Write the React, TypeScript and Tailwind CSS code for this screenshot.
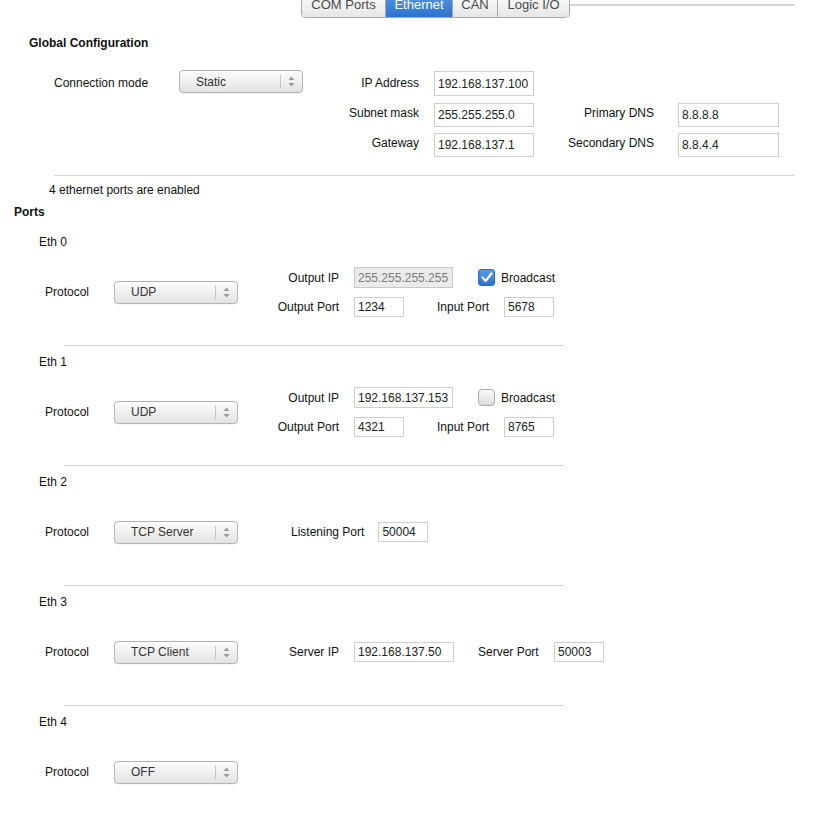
import React from "react";

const font = { fontFamily: '"Liberation Sans", Arial, sans-serif' };

function Select({ value }: { value: string }) {
  return (
    <div className="flex h-[23px] w-[124px] items-center rounded-[4px] border border-[#b3b3b3] bg-linear-to-b from-[#fdfdfd] to-[#e2e2e2] text-[12px] text-[#333] shadow-[0_1px_0_rgba(0,0,0,0.05)]">
      <span className="flex-1 pl-[16px] leading-[14px]">{value}</span>
      <div className="h-[13px] w-px bg-[#c4c4c4]" />
      <div className="flex w-[21px] justify-center">
        <svg width="7" height="11" viewBox="0 0 7 11">
          <path d="M3.5 0.5 L6.5 4 L0.5 4 Z" fill="#9a9a9a" />
          <path d="M3.5 10.5 L6.5 7 L0.5 7 Z" fill="#9a9a9a" />
        </svg>
      </div>
    </div>
  );
}

function Field({
  value,
  w,
  h = "h-[20px]",
  disabled = false,
}: {
  value: string;
  w: string;
  h?: string;
  disabled?: boolean;
}) {
  return (
    <div
      className={`${w} ${h} flex items-center border pl-[3px] text-[12px] leading-[14px] ${
        disabled
          ? "border-[#c8c8c8] bg-[#ebebeb] text-[#7a7a7a]"
          : "border-[#cfcfcf] bg-white text-[#222]"
      }`}
    >
      {value}
    </div>
  );
}

function Checkbox({ checked }: { checked: boolean }) {
  if (checked) {
    return (
      <div className="flex h-[17px] w-[17px] items-center justify-center rounded-[3px] border border-[#2a69bf] bg-linear-to-b from-[#5a9ae4] to-[#2f72cd]">
        <svg width="12" height="11" viewBox="0 0 12 11">
          <path d="M1.5 5.5 L4.6 9 L10.5 1.5" stroke="white" strokeWidth="2.2" fill="none" strokeLinecap="round" strokeLinejoin="round" />
        </svg>
      </div>
    );
  }
  return (
    <div className="h-[17px] w-[17px] rounded-[4px] border border-[#ababab] bg-linear-to-b from-[#fbfbfb] to-[#dcdcdc]" />
  );
}

function PortLabel({ children, w }: { children: React.ReactNode; w: string }) {
  return <div className={`${w} text-right text-[12px] leading-[14px]`}>{children}</div>;
}

type Port = {
  name: string;
  protocol: string;
  kind: "udp" | "server" | "client" | "off";
  outIp?: string;
  outPort?: string;
  inPort?: string;
  broadcast?: boolean;
  listen?: string;
  serverIp?: string;
  serverPort?: string;
};

const ports: Port[] = [
  { name: "Eth 0", protocol: "UDP", kind: "udp", outIp: "255.255.255.255", outPort: "1234", inPort: "5678", broadcast: true },
  { name: "Eth 1", protocol: "UDP", kind: "udp", outIp: "192.168.137.153", outPort: "4321", inPort: "8765", broadcast: false },
  { name: "Eth 2", protocol: "TCP Server", kind: "server", listen: "50004" },
  { name: "Eth 3", protocol: "TCP Client", kind: "client", serverIp: "192.168.137.50", serverPort: "50003" },
  { name: "Eth 4", protocol: "OFF", kind: "off" },
];

function PortBlock({ port, last }: { port: Port; last: boolean }) {
  return (
    <div className="h-[120px] pt-[5px]">
      <div className="pl-[39px] text-[12px] leading-[14px]">{port.name}</div>
      <div className="mt-[18px] flex h-[50px] items-center">
        <div className="w-[114px] pl-[45px] text-[12px] leading-[14px]">Protocol</div>
        <Select value={port.protocol} />
        {port.kind === "udp" && (
          <div className="flex flex-col gap-[9px]">
            <div className="flex h-[21px] items-center">
              <PortLabel w="w-[101px]">Output IP</PortLabel>
              <div className="ml-[15px]">
                <Field value={port.outIp!} w="w-[99px]" h="h-[21px]" disabled={port.broadcast} />
              </div>
              <div className="ml-[25px]">
                <Checkbox checked={!!port.broadcast} />
              </div>
              <span className="ml-[6px] text-[12px] leading-[14px]">Broadcast</span>
            </div>
            <div className="flex h-[20px] items-center">
              <PortLabel w="w-[101px]">Output Port</PortLabel>
              <div className="ml-[15px]">
                <Field value={port.outPort!} w="w-[50px]" />
              </div>
              <PortLabel w="w-[85px]">Input Port</PortLabel>
              <div className="ml-[15px]">
                <Field value={port.inPort!} w="w-[50px]" />
              </div>
            </div>
          </div>
        )}
        {port.kind === "server" && (
          <div className="flex items-center">
            <span className="ml-[53px] text-[12px] leading-[14px]">Listening Port</span>
            <div className="ml-[14px]">
              <Field value={port.listen!} w="w-[50px]" />
            </div>
          </div>
        )}
        {port.kind === "client" && (
          <div className="flex items-center">
            <PortLabel w="w-[101px]">Server IP</PortLabel>
            <div className="ml-[15px]">
              <Field value={port.serverIp!} w="w-[100px]" />
            </div>
            <span className="ml-[24px] w-[61px] text-[12px] leading-[14px]">Server Port</span>
            <div className="ml-[15px]">
              <Field value={port.serverPort!} w="w-[50px]" />
            </div>
          </div>
        )}
      </div>
      {!last && <div className="ml-[64px] mt-[28px] h-px w-[500px] bg-[#d2d2d2]" />}
    </div>
  );
}

export default function App() {
  const tabs = [
    { label: "COM Ports", w: "w-[84px]" },
    { label: "Ethernet", w: "w-[67px]", active: true },
    { label: "CAN", w: "w-[45px]" },
    { label: "Logic I/O", w: "w-[71px]" },
  ];

  return (
    <div className="min-h-screen bg-white text-[#111]" style={font}>
      {/* tab strip, scrolled so its top is cut off */}
      <div className="flex h-[18px] overflow-hidden">
        <div className="w-[301px]" />
        <div className="flex h-[27px] self-end overflow-hidden rounded-b-[5px] border border-t-0 border-[#a9a9a9]">
          {tabs.map((t, i) => (
            <div
              key={t.label}
              className={`${t.w} flex items-center justify-center text-[13px] leading-[15px] ${
                i < tabs.length - 1 ? "border-r border-[#a9a9a9]" : ""
              } ${
                t.active
                  ? "bg-linear-to-b from-[#5a9be3] to-[#2c72cf] text-white"
                  : "bg-linear-to-b from-[#ffffff] to-[#e6e6e6] text-[#4a4a4a]"
              }`}
            >
              {t.label}
            </div>
          ))}
        </div>
        <div className="mr-[20px] mt-[4px] h-[2px] flex-1 bg-[#d3d3d3]" />
      </div>

      <div className="mt-[18px] pl-[29px] text-[12px] font-bold leading-[14px]">Global Configuration</div>

      <div className="mt-[20px] flex items-start text-[12px] leading-[14px]">
        <div className="w-[179px] pl-[54px] pt-[6px]">Connection mode</div>
        <Select value="Static" />
        <div className="w-[116px] pt-[6px] text-right">IP Address</div>
        <div className="ml-[15px] mt-[1px]">
          <Field value="192.168.137.100" w="w-[100px]" h="h-[25px]" />
        </div>
      </div>

      <div className="mt-[7px] flex items-start text-[12px] leading-[14px]">
        <div className="w-[419px] pt-[3px] text-right">Subnet mask</div>
        <div className="ml-[15px]">
          <Field value="255.255.255.0" w="w-[100px]" h="h-[24px]" />
        </div>
        <div className="w-[120px] pt-[3px] text-right">Primary DNS</div>
        <div className="ml-[24px]">
          <Field value="8.8.8.8" w="w-[101px]" h="h-[24px]" />
        </div>
      </div>

      <div className="mt-[6px] flex items-start text-[12px] leading-[14px]">
        <div className="w-[419px] pt-[3px] text-right">Gateway</div>
        <div className="ml-[15px]">
          <Field value="192.168.137.1" w="w-[100px]" h="h-[24px]" />
        </div>
        <div className="w-[120px] pt-[3px] text-right">Secondary DNS</div>
        <div className="ml-[24px]">
          <Field value="8.8.4.4" w="w-[101px]" h="h-[24px]" />
        </div>
      </div>

      <div className="ml-[54px] mt-[18px] h-px w-[741px] bg-[#d2d2d2]" />

      <div className="mt-[7px] pl-[49px] text-[12px] leading-[14px]">4 ethernet ports are enabled</div>
      <div className="mt-[8px] pl-[14px] text-[12px] font-bold leading-[14px]">Ports</div>

      <div className="mt-[11px]">
        {ports.map((p, i) => (
          <PortBlock key={p.name} port={p} last={i === ports.length - 1} />
        ))}
      </div>
    </div>
  );
}
